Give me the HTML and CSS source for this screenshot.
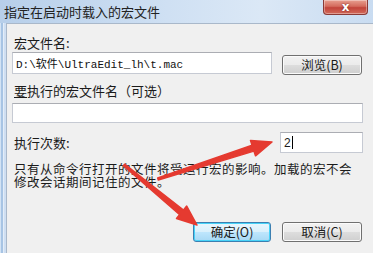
FILE: index.html
```html
<!DOCTYPE html>
<html lang="zh-CN">
<head>
<meta charset="utf-8">
<title>指定在启动时载入的宏文件</title>
<link rel="stylesheet" href="styles.css">
</head>
<body>
<div class="window">
  <div class="titlebar">
    <span class="title">指定在启动时载入的宏文件</span>
    <div class="close"><span>x</span></div>
  </div>
  <div class="main">
    <div class="frame-left"></div>
    <div class="panel">
      <div class="label">宏文件名:</div>
      <div class="row row-path">
        <div class="textbox tb-path"><span class="mono">D:\软件\UltraEdit_lh\t.mac</span></div>
        <div class="btn btn-browse">浏览(B)</div>
      </div>
      <div class="label label-opt"><span class="ul">要</span>执行的宏文件名（可选）</div>
      <div class="textbox tb-full"></div>
      <div class="row row-count">
        <div class="label">执行次数:</div>
        <div class="textbox tb-count"><span class="val">2</span><span class="caret"></span></div>
      </div>
      <div class="note">
        <div class="note-line">只有从命令行打开的文件将受运行宏的影响。加载的宏不会</div>
        <div class="note-line">修改会话期间记住的文件。</div>
      </div>
      <div class="actions">
        <div class="btn btn-default">确定(O)</div>
        <div class="btn">取消(C)</div>
      </div>
    </div>
  </div>
  <svg class="arrows" width="373" height="253" viewBox="0 0 373 253">
    <polygon points="158.3,180 253.9,151.1 255.5,155.8 272,142 250.5,140.6 252.1,145.3 157.7,178" />
    <polygon points="123.4,165.8 179.7,214.6 176.5,218.5 197,225 186.7,206.1 183.5,210 124.6,164.2" />
  </svg>
</div>
</body>
</html>
```
FILE: styles.css
```css
* { box-sizing: border-box; }
html, body { margin: 0; padding: 0; }
body {
  width: 373px;
  height: 253px;
  overflow: hidden;
  font-family: "Noto Sans CJK SC", "Liberation Sans", sans-serif;
  font-size: 13px;
  color: #1b1b1b;
}
.window {
  position: relative;
  width: 373px;
  height: 253px;
  display: flex;
  flex-direction: column;
  background: #c9dbef;
}
.titlebar {
  height: 23px;
  flex: none;
  display: flex;
  justify-content: space-between;
  align-items: flex-start;
  padding-left: 4px;
  background: linear-gradient(to right, #b7cfea 0%, #cfe0f3 45%, #dbe8f6 70%, #c9dcf1 100%);
}
.title {
  line-height: 23px;
  font-size: 13px;
  color: #222;
}
.close {
  width: 45px;
  height: 15px;
  margin-right: 5px;
  border: 1px solid #8a3a36;
  border-top: none;
  border-radius: 0 0 4px 4px;
  background: linear-gradient(to bottom, #e8a090 0%, #d46b5d 45%, #c2443a 55%, #d26a5a 100%);
  display: flex;
  align-items: center;
  justify-content: center;
  box-shadow: inset 0 0 0 1px rgba(255,255,255,0.35);
}
.close span {
  color: #fff;
  font-family: "DejaVu Sans", sans-serif;
  font-weight: bold;
  font-size: 12px;
  line-height: 12px;
  text-shadow: 0 0 2px #6b1b14;
}
.main {
  flex: 1;
  display: flex;
}
.frame-left {
  width: 6px;
  flex: none;
  background: linear-gradient(to right, #d3e3f4 0 1px, #a7c4e4 1px 3px, #e4edf8 3px 4px, #cfdff2 4px 6px);
}
.panel {
  flex: 1;
  background: #f0f0f0;
  border-left: 1px solid #a9b8ca;
  border-top: 1px solid #a9b8ca;
  padding: 11px 10px 0 5px;
  display: flex;
  flex-direction: column;
}
.label {
  height: 15px;
  line-height: 15px;
  margin-left: 2px;
  white-space: nowrap;
}
.ul { text-decoration: underline; }
.row { display: flex; }
.row-path {
  margin-top: 2px;
  gap: 10px;
  align-items: flex-start;
}
.textbox {
  background: #fff;
  border: 1px solid #c6cad3;
  border-top-color: #abadb3;
}
.tb-path {
  width: 260px;
  height: 22px;
  display: flex;
  align-items: center;
  padding-left: 3px;
}
.mono {
  font-family: "Liberation Mono", "Noto Sans CJK SC", monospace;
  font-size: 11px;
  color: #111;
  white-space: nowrap;
}
.btn {
  width: 80px;
  height: 20px;
  border: 1px solid #707070;
  border-radius: 3px;
  background: linear-gradient(to bottom, #f2f2f2 0%, #ebebeb 50%, #dddddd 51%, #cfcfcf 100%);
  box-shadow: inset 0 0 0 1px #fbfbfb;
  display: flex;
  align-items: center;
  justify-content: center;
  font-size: 12.5px;
  line-height: 1;
  color: #1a1a1a;
}
.btn-browse { margin-top: 3px; }
.label-opt { margin-top: 8px; }
.tb-full {
  margin-top: 5px;
  height: 20px;
  width: 100%;
}
.row-count {
  margin-top: 9px;
  justify-content: space-between;
  align-items: center;
}
.tb-count {
  width: 83px;
  height: 21px;
  display: flex;
  align-items: center;
  padding-left: 3px;
}
.val {
  font-family: "Liberation Sans", sans-serif;
  font-size: 12px;
}
.caret {
  width: 1px;
  height: 13px;
  background: #000;
  margin-left: 1px;
}
.note {
  margin: 9px 0 0 2px;
  display: flex;
  flex-direction: column;
}
.note-line {
  height: 13px;
  line-height: 13px;
  font-size: 12.5px;
  letter-spacing: 0.5px;
  white-space: nowrap;
}
.actions {
  margin-top: 34px;
  display: flex;
  justify-content: flex-end;
  gap: 11px;
  padding-right: 1px;
}
.btn-default {
  width: 78px;
  border-color: #3c7fb1;
  background: linear-gradient(to bottom, #eaf6fd 0%, #d9f0fc 50%, #bee6fd 51%, #a7d9f5 100%);
  box-shadow: inset 0 0 0 1px #48d3f8;
}
.arrows {
  position: absolute;
  left: 0;
  top: 0;
  pointer-events: none;
}
.arrows polygon {
  fill: #e53a30;
  stroke: #e53a30;
  stroke-width: 1.5;
  stroke-linejoin: round;
}
```
